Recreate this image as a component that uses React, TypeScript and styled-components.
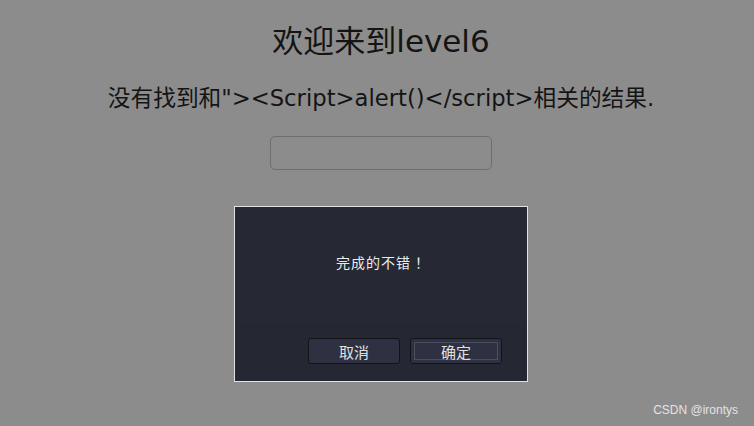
import React from "react";
import styled, { createGlobalStyle } from "styled-components";

const Global = createGlobalStyle`
  html, body { margin: 0; padding: 0; }
  body {
    background: #8c8c8c;
    font-family: "DejaVu Sans", "Noto Sans CJK SC", sans-serif;
    width: 754px;
    height: 426px;
    overflow: hidden;
  }
`;

const Page = styled.div`
  position: relative;
  width: 754px;
  height: 426px;
  box-sizing: border-box;
  padding-left: 8px;
  display: flex;
  flex-direction: column;
  align-items: center;
`;

const Title = styled.h1`
  margin: 20px 0 0;
  font-size: 31px;
  font-weight: 400;
  line-height: 42px;
  color: #141414;
`;

const Result = styled.h2`
  margin: 20px 0 0;
  font-size: 22.7px;
  font-weight: 400;
  line-height: 32px;
  color: #141414;
  white-space: nowrap;
`;

const Search = styled.input`
  margin-top: 22px;
  width: 222px;
  height: 34px;
  box-sizing: border-box;
  border: 1px solid #6f6f6f;
  border-radius: 5px;
  background: transparent;
  outline: none;
`;

const Dialog = styled.div`
  margin-top: 36px;
  width: 294px;
  height: 176px;
  box-sizing: border-box;
  border: 1px solid #e2e2e2;
  background: #262833;
  display: flex;
  flex-direction: column;
`;

const Message = styled.div`
  flex: 0 0 116px;
  display: flex;
  justify-content: center;
  padding: 45px 0 0 4px;
  box-sizing: border-box;
  font-size: 14px;
  letter-spacing: 1px;
  color: #ececec;
  font-family: "Noto Sans CJK SC", sans-serif;
`;

const Actions = styled.div`
  flex: 1;
  background: #252732;
  display: flex;
  justify-content: flex-end;
  align-items: flex-start;
  gap: 10px;
  padding: 15px 25px 0 0;
`;

const Button = styled.button<{ $focused?: boolean }>`
  width: 92px;
  height: 26px;
  box-sizing: border-box;
  border: 1px solid #121319;
  border-radius: 3px;
  background: #2e3142;
  color: #e0e0e0;
  font-size: 15px;
  font-family: "Noto Sans CJK SC", sans-serif;
  padding: 0;
  box-shadow: ${(p) => (p.$focused ? "inset 0 0 0 3px #2e3142, inset 0 0 0 4px #4a4d5c" : "none")};
`;

const Watermark = styled.div`
  position: absolute;
  right: 16px;
  bottom: 9px;
  font-size: 12px;
  color: #e4e4e4;
  font-family: "Liberation Sans", sans-serif;
`;

export default function App() {
  return (
    <Page>
      <Global />
      <Title>欢迎来到level6</Title>
      <Result>没有找到和"&gt;&lt;Script&gt;alert()&lt;/script&gt;相关的结果.</Result>
      <Search type="text" />
      <Dialog>
        <Message>完成的不错 ！</Message>
        <Actions>
          <Button>取消</Button>
          <Button $focused>确定</Button>
        </Actions>
      </Dialog>
      <Watermark>CSDN @irontys</Watermark>
    </Page>
  );
}
